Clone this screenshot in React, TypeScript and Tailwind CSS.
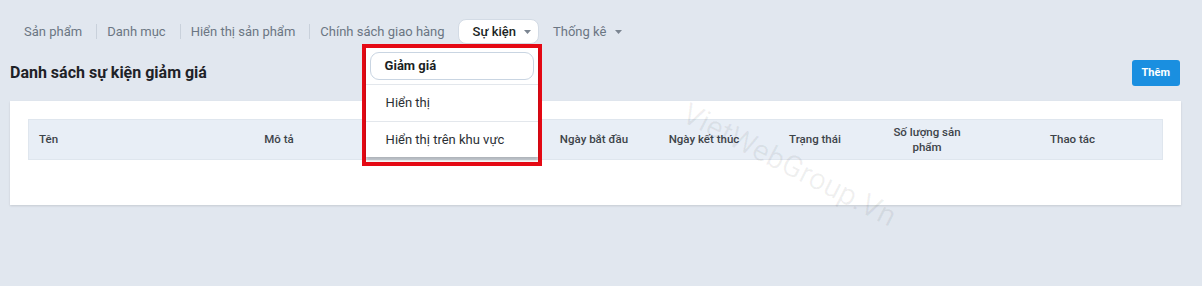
import React from "react";

const navItems = ["Sản phẩm", "Danh mục", "Hiển thị sản phẩm", "Chính sách giao hàng"];

const Caret = ({ gap }: { gap: string }) => (
  <svg width="7" height="4" viewBox="0 0 7 4" className={gap}>
    <path d="M0 0h7L3.5 4z" fill="#7b8591" />
  </svg>
);

const HeaderCell = ({ w, children, left }: { w: string; children?: React.ReactNode; left?: boolean }) => (
  <div className={`${w} shrink-0 flex items-center ${left ? "justify-start pl-[10px]" : "justify-center text-center"}`}>
    {children}
  </div>
);

const App = () => {
  return (
    <div
      className="relative w-full h-[286px] overflow-hidden bg-[#e1e7ef]"
      style={{ fontFamily: "Roboto, 'Liberation Sans', sans-serif" }}
    >
      {/* top nav */}
      <div className="pt-[19px] pl-[24px] flex items-center h-[44px] text-[13px] text-[#6b7683]">
        {navItems.map((item, i) => (
          <div key={item} className="flex items-center">
            <span>{item}</span>
            {i < navItems.length - 1 && <span className="ml-[14px] mr-[10px] w-px h-[15px] bg-[#c9d1db]" />}
          </div>
        ))}
        <div className="relative ml-[13px]">
          <button className="flex items-center h-[25px] pl-[14px] pr-[7px] rounded-[8px] bg-white border border-[#d3dbe5] text-[#1b1f24] font-medium">
            Sự kiện
            <Caret gap="ml-[8px]" />
          </button>
          {/* dropdown with highlight */}
          <div className="absolute left-[-96px] top-[25px] w-[180px] h-[122px] border-[4px] border-[#e50914] z-10">
            <div className="bg-white shadow-[0_3px_3px_rgba(0,0,0,0.25)] px-[4px] pt-[4px] h-[109px]">
              <div className="h-[28px] flex items-center pl-[14px] rounded-[9px] border border-[#c9d5e2] text-[13px] font-bold text-[#1b1f24]">
                Giảm giá
              </div>
              <div className="mt-[4px] border-t border-[#e3e7ec] -mx-[4px]" />
              <div className="h-[36px] flex items-center pl-[16px] text-[13px] text-[#2b2f34]">Hiển thị</div>
              <div className="border-t border-[#e3e7ec] -mx-[4px]" />
              <div className="h-[36px] flex items-center pl-[16px] text-[13px] text-[#2b2f34]">Hiển thị trên khu vực</div>
            </div>
          </div>
        </div>
        <span className="ml-[14px]">Thống kê</span>
        <Caret gap="ml-[9px]" />
      </div>

      {/* title row */}
      <div className="mt-[16px] pl-[10px] pr-[22px] flex items-center justify-between h-[26px]">
        <h1 className="text-[16px] font-bold text-[#1e2227]">Danh sách sự kiện giảm giá</h1>
        <button className="h-[26px] px-[10px] rounded-[3px] bg-[#1a8fe0] text-white text-[11px] font-bold">Thêm</button>
      </div>

      {/* card */}
      <div className="mt-[15px] ml-[10px] mr-[21px] bg-white shadow-[0_1px_2px_rgba(0,0,0,0.12)] pt-[18px] pb-[45px] px-[18px]">
        <div className="flex h-[41px] bg-[#e8eef6] border border-[#dfe6ee] text-[11.5px] font-medium text-[#3d4349] leading-[15px]">
          <HeaderCell w="w-[150px]" left>Tên</HeaderCell>
          <HeaderCell w="w-[200px]">Mô tả</HeaderCell>
          <HeaderCell w="w-[160px]" />
          <HeaderCell w="w-[110px]">Ngày bắt đầu</HeaderCell>
          <HeaderCell w="w-[110px]">Ngày kết thúc</HeaderCell>
          <HeaderCell w="w-[112px]">Trạng thái</HeaderCell>
          <HeaderCell w="w-[112px]">
            <span className="w-[80px]">Số lượng sản phẩm</span>
          </HeaderCell>
          <HeaderCell w="flex-1">Thao tác</HeaderCell>
        </div>
      </div>

      {/* watermark */}
      <div className="absolute left-[672px] top-[142px] rotate-[27deg] text-[30px] text-black/[0.06] pointer-events-none select-none whitespace-nowrap">
        VietWebGroup.Vn
      </div>
    </div>
  );
};

export default App;
